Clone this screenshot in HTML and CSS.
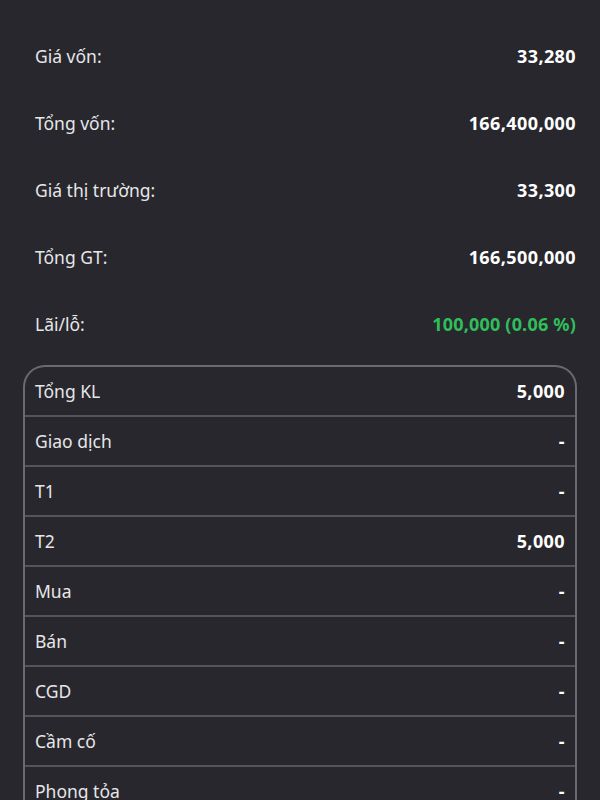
FILE: index.html
```html
<!DOCTYPE html>
<html lang="vi">
<head>
  <meta charset="UTF-8" />
  <meta name="viewport" content="width=device-width, initial-scale=1" />
  <title>Chi tiết danh mục</title>
  <link rel="stylesheet" href="styles.css">
</head>
<body>
  <div class="summary">
    <div class="row"><span class="label">Giá vốn:</span><span class="value">33,280</span></div>
    <div class="row"><span class="label">Tổng vốn:</span><span class="value">166,400,000</span></div>
    <div class="row"><span class="label">Giá thị trường:</span><span class="value">33,300</span></div>
    <div class="row"><span class="label">Tổng GT:</span><span class="value">166,500,000</span></div>
    <div class="row"><span class="label">Lãi/lỗ:</span><span class="value up">100,000 (0.06 %)</span></div>
  </div>

  <div class="volume">
    <div class="vrow"><span class="label">Tổng KL</span><span class="value">5,000</span></div>
    <div class="vrow"><span class="label">Giao dịch</span><span class="value">-</span></div>
    <div class="vrow"><span class="label">T1</span><span class="value">-</span></div>
    <div class="vrow"><span class="label">T2</span><span class="value">5,000</span></div>
    <div class="vrow"><span class="label">Mua</span><span class="value">-</span></div>
    <div class="vrow"><span class="label">Bán</span><span class="value">-</span></div>
    <div class="vrow"><span class="label">CGD</span><span class="value">-</span></div>
    <div class="vrow"><span class="label">Cầm cố</span><span class="value">-</span></div>
    <div class="vrow"><span class="label">Phong tỏa</span><span class="value">-</span></div>
  </div>
</body>
</html>
```

FILE: styles.css
```css
html, body {
  margin: 0;
  background: #28272d;
}
body {
  font-family: "Noto Sans", "Open Sans", sans-serif;
  color: #e6e6e8;
  font-size: 17.5px;
  height: 800px;
  overflow: hidden;
}
.summary {
  padding: 22px 24px 0 35px;
}
.row {
  display: flex;
  justify-content: space-between;
  align-items: center;
  height: 67px;
}
.value {
  font-weight: bold;
  font-size: 18px;
  letter-spacing: 0.4px;
  color: #ffffff;
}
.value.up {
  color: #2fbf5a;
  letter-spacing: 0.2px;
}
.volume {
  margin: 8px 23px 0 23px;
  border: 2px solid #6b6a70;
  border-bottom: none;
  border-radius: 22px 22px 0 0;
}
.vrow {
  display: flex;
  justify-content: space-between;
  align-items: center;
  height: 48px;
  padding: 0 10px 0 10px;
  border-bottom: 2px solid #55545a;
}
```
